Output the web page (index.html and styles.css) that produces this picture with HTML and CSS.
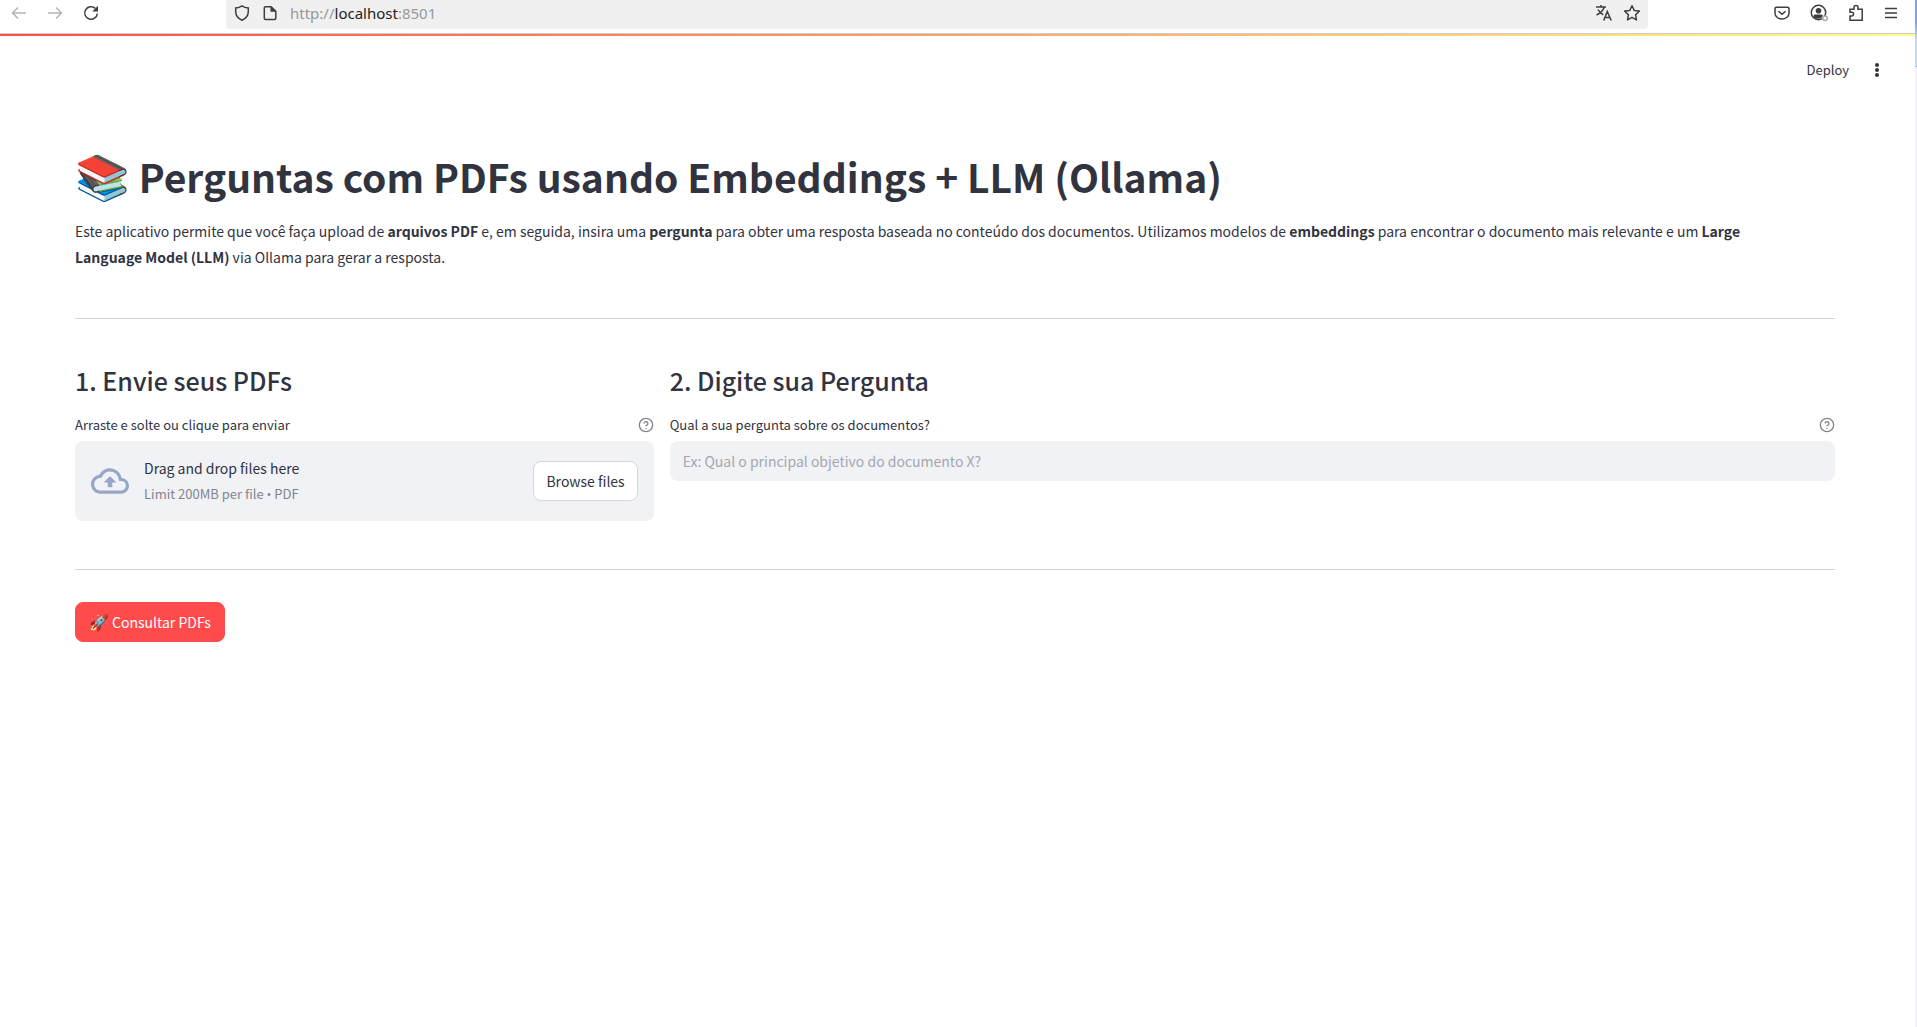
FILE: index.html
```html
<!DOCTYPE html>
<html lang="pt-BR">
<head>
<meta charset="utf-8">
<title>Perguntas com PDFs</title>
<link rel="stylesheet" href="styles.css">
</head>
<body>
<div class="window">
  <nav class="browser-bar" aria-label="Navegador">
    <div class="nav-buttons">
      <button class="icon-button dim" aria-label="Voltar"><svg width="16" height="16" viewBox="0 0 16 16"><path d="M15 8H1.500M7 2.500 1.500 8 7 13.500"/></svg></button>
      <button class="icon-button dim" aria-label="Avançar"><svg width="16" height="16" viewBox="0 0 16 16"><path d="M1 8h13.500M9 2.500 14.500 8 9 13.500"/></svg></button>
      <button class="icon-button" aria-label="Recarregar"><svg width="16" height="16" viewBox="0 0 16 16"><path d="M14.300 8.500A6.300 6.300 0 1 1 12.300 3.400"/><path class="solid" d="M15 .8v5.700H9.300z"/></svg></button>
    </div>
    <div class="address">
      <svg width="16" height="16" viewBox="0 0 16 16"><path d="M8 .9c2 1.500 4.300 2 6.300 2.100v3.500c0 4-2.300 7-6.300 8.700C4 13.500 1.700 10.500 1.700 6.500V3C3.700 2.900 6 2.400 8 .9z"/></svg>
      <svg width="16" height="16" viewBox="0 0 16 16"><path d="M3.500 1.700h5.700l4.600 4.500v7.100a1.200 1.200 0 0 1-1.200 1.200H3.500a1.200 1.200 0 0 1-1.200-1.200V2.900a1.200 1.200 0 0 1 1.200-1.200z"/><path class="solid" d="M8.500 1.300v5.500h5.500z"/></svg>
      <span class="url">http://<span class="host">localhost</span>:8501</span>
      <div class="address-actions">
        <button class="icon-button" aria-label="Traduzir"><svg width="18" height="18" viewBox="0 0 18 18"><path d="M1 3h10M6 1v2M9.300 3C8.200 6.500 5 9.300 1.500 11M3 5.500c1.300 2.500 3 4.200 5.300 5.300M8.700 16.500l3.600-9 3.900 9M10 13.500h5"/></svg></button>
        <button class="icon-button" aria-label="Favoritar"><svg width="18" height="18" viewBox="0 0 18 18"><path d="M9 1.700l2.200 4.700 5.100.7-3.700 3.600.9 5.200L9 13.400l-4.500 2.500.9-5.200L1.700 7.100l5.100-.7z" stroke-linejoin="round"/></svg></button>
      </div>
    </div>
    <div class="tools">
      <button class="icon-button" aria-label="Pocket"><svg width="16" height="16" viewBox="0 0 16 16"><path d="M2.500 2.200h11a1.500 1.500 0 0 1 1.500 1.500V8A7 6 0 0 1 1 8V3.700a1.500 1.500 0 0 1 1.500-1.500zM4.500 6.200 8 9.300l3.500-3.100"/></svg></button>
      <button class="icon-button" aria-label="Conta"><svg width="18" height="18" viewBox="0 0 18 18"><circle cx="8.500" cy="8.500" r="7.200"/><circle class="solid" cx="8.500" cy="6.700" r="2.800"/><path class="solid" d="M3.700 13.500v-1.700c0-1 .8-1.300 1.500-1.300h6c1.500 0 1.800 1 1.300 2-1.800 2.500-5.500 3-8.800 1z"/><circle class="badge" cx="15" cy="14.300" r="2.300"/></svg></button>
      <button class="icon-button" aria-label="Extensões"><svg width="16" height="18" viewBox="0 0 16 18"><path d="M2 16.300V12h1.700a1.900 1.900 0 0 0 0-3.800H2V5.200h4V3.500a2 2 0 0 1 4 0v1.700h4.200v11.100z"/></svg></button>
      <button class="icon-button" aria-label="Menu"><svg width="14" height="14" viewBox="0 0 14 14"><path d="M1 2.500h12M1 7h12M1 11.500h12"/></svg></button>
    </div>
  </nav>
  <div class="decoration"></div>
  <header class="app-header">
    <button class="deploy">Deploy</button>
    <button class="icon-button" aria-label="Opções"><svg width="16" height="16" viewBox="0 0 16 16"><g class="dots"><circle cx="8" cy="3" r="2"/><circle cx="8" cy="8" r="2"/><circle cx="8" cy="13" r="2"/></g></svg></button>
  </header>
  <main class="content">
    <h1><span class="title-emoji">📚</span> Perguntas com PDFs usando Embeddings + LLM (Ollama)</h1>
    <p class="intro">Este aplicativo permite que você faça upload de <strong>arquivos PDF</strong> e, em seguida, insira uma <strong>pergunta</strong> para obter uma resposta baseada no conteúdo dos documentos. Utilizamos modelos de <strong>embeddings</strong> para encontrar o documento mais relevante e um <strong>Large Language Model (LLM)</strong> via Ollama para gerar a resposta.</p>
    <hr>
    <div class="columns">
      <section class="column upload">
        <h2>1. Envie seus PDFs</h2>
        <div class="label-row">
          <span id="upload-label">Arraste e solte ou clique para enviar</span>
          <button class="icon-button help" aria-label="Ajuda"><svg width="16" height="16" viewBox="0 0 24 24"><circle cx="12" cy="12" r="10"/><path d="M9.100 9a3 3 0 0 1 5.800 1c0 2-2.900 3-2.900 3M12 17v.1"/></svg></button>
        </div>
        <div class="dropzone">
          <svg class="cloud" width="38" height="38" viewBox="0 0 24 24"><path d="M19.350 10.040A7.490 7.490 0 0 0 12 4C9.110 4 6.600 5.640 5.350 8.040A5.994 5.994 0 0 0 0 14c0 3.310 2.690 6 6 6h13c2.760 0 5-2.240 5-5 0-2.640-2.050-4.780-4.650-4.960zM19 18H6c-2.210 0-4-1.790-4-4 0-2.050 1.530-3.760 3.560-3.970l1.070-.11.500-.95A5.469 5.469 0 0 1 12 6c2.620 0 4.880 1.860 5.390 4.430l.3 1.500 1.530.11A2.980 2.980 0 0 1 22 15c0 1.650-1.350 3-3 3zM8 13h2.550v3h2.900v-3H16l-4-4z"/></svg>
          <div class="drop-text">
            <span>Drag and drop files here</span>
            <small>Limit 200MB per file <span class="bullet">•</span> PDF</small>
          </div>
          <button class="button" aria-describedby="upload-label">Browse files</button>
        </div>
      </section>
      <section class="column question">
        <h2>2. Digite sua Pergunta</h2>
        <div class="label-row">
          <label for="question">Qual a sua pergunta sobre os documentos?</label>
          <button class="icon-button help" aria-label="Ajuda"><svg width="16" height="16" viewBox="0 0 24 24"><circle cx="12" cy="12" r="10"/><path d="M9.100 9a3 3 0 0 1 5.800 1c0 2-2.900 3-2.900 3M12 17v.1"/></svg></button>
        </div>
        <input id="question" type="text" placeholder="Ex: Qual o principal objetivo do documento X?">
      </section>
    </div>
    <hr>
    <button class="button primary"><span class="button-emoji">🚀</span> Consultar PDFs</button>
  </main>
</div>
</body>
</html>
```
FILE: styles.css
```css
* {
  box-sizing: border-box;
}

body {
  margin: 0;
  background: #fff;
  color: #31333f;
  font: 14px/26px "Noto Sans CJK SC", "Noto Color Emoji", sans-serif;
}

button {
  font: inherit;
  color: inherit;
}

.window {
  min-height: 100vh;
  border: 0 solid;
  border-image: linear-gradient(#7ba4ea 0 24px, #c5daf6 40px 67px, #a9bbd9 67px 68px, #f0f4f9 68px) 1;
  border-right-width: 2px;
}

svg {
  display: block;
  fill: none;
  stroke: currentColor;
  stroke-width: 1.5;
}

.solid {
  fill: currentColor;
  stroke: none;
}

.icon-button {
  border: 0;
  padding: 0;
  background: none;
}

/* Browser toolbar */
.browser-bar {
  display: flex;
  height: 34px;
  padding-bottom: 4px;
  border-bottom: 1px solid #ccc;
  color: #3e3e42;
}

.nav-buttons {
  display: flex;
  align-items: center;
  gap: 20px;
  width: 226px;
  padding: 0 11px 3px;
}

.dim {
  color: #b5b5b5;
}

.address {
  flex: 1;
  display: flex;
  align-items: center;
  gap: 12px;
  padding: 0 7px 4px 8px;
  border-radius: 0 0 4px 4px;
  background: #f0f0f0;
}

.url {
  color: #999;
  font: 15px/20px "Noto Sans", sans-serif;
}

.host {
  color: #222;
}

.address-actions {
  display: flex;
  gap: 10px;
  margin-left: auto;
}

.tools {
  display: flex;
  align-items: center;
  justify-content: flex-end;
  gap: 20px;
  width: 267px;
  padding: 0 17px 3px;
}

.badge {
  fill: #fff;
  stroke: #aaa;
}

.decoration {
  height: 2px;
  background: linear-gradient(90deg, #ff4b4b, #fffd80);
}

/* App header */
.app-header {
  display: flex;
  align-items: center;
  justify-content: flex-end;
  gap: 20px;
  height: 68px;
  padding-right: 30px;
}

.deploy {
  border: 0;
  padding: 0;
  background: none;
  font-size: 13px;
  line-height: 20px;
}

.dots {
  fill: #31333f;
  stroke: none;
}

/* Page content */
.content {
  padding: 44px 80px 0 75px;
}

h1 {
  margin: 0 0 14px;
  font-size: 39px;
  font-weight: 700;
  line-height: 56px;
}

.title-emoji {
  font-size: 44px;
  line-height: 40px;
}

.intro {
  margin: 0;
  padding-right: 40px;
}

hr {
  margin: 48px 0 32px;
  border: 0;
  border-top: 1px solid #d6d6d9;
}

.columns {
  display: flex;
  gap: 16px;
}

.column {
  display: flex;
  flex-direction: column;
}

.upload {
  flex: 1 1 calc(33.333% - 16px);
}

.question {
  flex: 1 1 calc(66.667% - 16px);
}

h2 {
  margin: 0 0 16px;
  padding-top: 12px;
  font-size: 25px;
  font-weight: 500;
  line-height: 34px;
}

.label-row {
  display: flex;
  align-items: center;
  justify-content: space-between;
  margin-bottom: 4px;
  font-size: 13px;
  line-height: 24px;
}

.help {
  color: #84858c;
}

.help svg {
  stroke-width: 2;
  stroke-linecap: round;
}

.dropzone {
  display: flex;
  align-items: center;
  gap: 15px;
  padding: 14px 16px;
  border-radius: 8px;
  background: #f0f2f6;
}

.cloud {
  fill: #97a6c3;
  stroke: none;
}

.drop-text {
  flex: 1;
  display: flex;
  flex-direction: column;
}

.drop-text small {
  color: #83858c;
  font-size: 13px;
  line-height: 25px;
}

.bullet {
  font-family: "Open Sans", sans-serif;
}

.button {
  height: 40px;
  padding: 0 12px;
  border: 1px solid #d6d6d9;
  border-radius: 8px;
  background: #fff;
}

input {
  height: 40px;
  padding: 0 13px;
  border: 0;
  border-radius: 8px;
  background: #f0f2f6;
  color: inherit;
  font: inherit;
}

input::placeholder {
  color: #a5a7ad;
}

.primary {
  padding: 0 13px;
  border-color: #ff4b4b;
  background: #ff4b4b;
  color: #fff;
}

.button-emoji {
  font-size: 16px;
  line-height: 20px;
}
```
